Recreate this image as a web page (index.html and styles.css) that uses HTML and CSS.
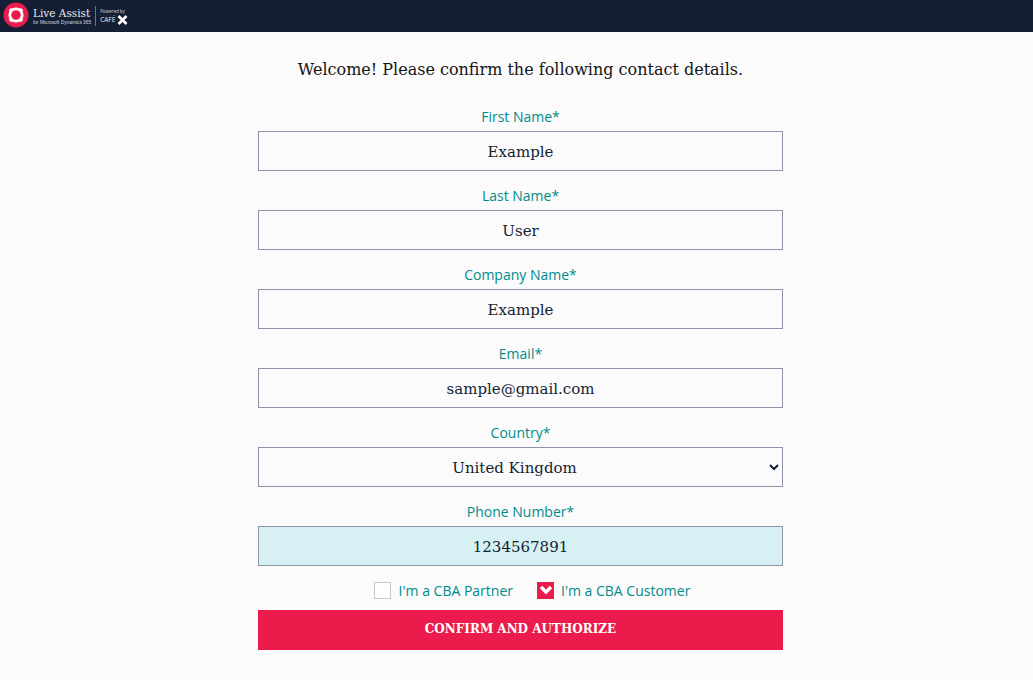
FILE: index.html
```html
<!DOCTYPE html>
<html lang="en">
<head>
  <meta charset="UTF-8" />
  <title>Live Assist</title>
  <link rel="stylesheet" href="styles.css">
</head>
<body>
  <!-- Top bar -->
  <header class="topbar">
    <svg class="logo-mark" width="26" height="26" viewBox="0 0 26 26">
      <circle cx="13" cy="13" r="12.5" fill="#eb1c4b" />
      <circle cx="13" cy="13" r="6.2" fill="none" stroke="#fff" stroke-width="2.8" />
      <path d="M7 7l2 2M19 7l-2 2M7 19l2-2M19 19l-2-2" stroke="#fff" stroke-width="3.6" />
    </svg>
    <div class="brand">
      <span class="brand-name">Live Assist</span>
      <span class="brand-sub">for Microsoft Dynamics 365</span>
    </div>
    <div class="powered">
      <span class="powered-by">Powered by</span>
      <span class="powered-cafe">CAFÉ
        <svg width="11" height="10" viewBox="0 0 11 10">
          <path d="M1.5 1l8 8M9.5 1l-8 8" stroke="#fff" stroke-width="2.6" />
        </svg>
      </span>
    </div>
  </header>
  <!-- Form -->
  <main class="content">
    <h1 class="title">Welcome! Please confirm the following contact details.</h1>
    <form class="contact-form">
      <label class="field">First Name*
        <input class="control" type="text" value="Example" />
      </label>
      <label class="field">Last Name*
        <input class="control" type="text" value="User" />
      </label>
      <label class="field">Company Name*
        <input class="control" type="text" value="Example" />
      </label>
      <label class="field">Email*
        <input class="control" type="email" value="sample@gmail.com" />
      </label>
      <label class="field">Country*
        <select class="control">
          <option>United Kingdom</option>
        </select>
      </label>
      <label class="field">Phone Number*
        <input class="control control-filled" type="text" value="1234567891" />
      </label>
      <div class="checks">
        <label class="check"><span class="box"></span>I'm a CBA Partner</label>
        <label class="check"><span class="box box-on">
          <svg width="14" height="10" viewBox="0 0 14 10">
            <path d="M2 2l5 5 5-5" fill="none" stroke="#fff" stroke-width="3.4" />
          </svg>
        </span>I'm a CBA Customer</label>
      </div>
      <button class="submit" type="button">CONFIRM AND AUTHORIZE</button>
    </form>
  </main>
</body>
</html>
```

FILE: styles.css
```css
body {
  margin: 0;
  background: #fbfbfc;
  font-family: "Open Sans", sans-serif;
}
/* Top bar */
.topbar {
  height: 32px;
  background: #141f35;
  color: #fff;
  display: flex;
  align-items: center;
  padding-left: 3px;
  overflow: hidden;
}
.logo-mark {
  flex: none;
  margin-bottom: 3px;
}
.brand {
  display: flex;
  flex-direction: column;
  margin-left: 4px;
}
.brand-name {
  font-family: "DejaVu Serif", serif;
  font-size: 10.5px;
  line-height: 13px;
  color: #e8e9ec;
}
.brand-sub {
  font-family: "Liberation Sans", sans-serif;
  font-size: 4.8px;
  line-height: 6px;
  color: #d6d8dd;
}
.powered {
  margin-left: 4px;
  padding-left: 4px;
  border-left: 1px solid #6b7384;
  height: 20px;
  display: flex;
  flex-direction: column;
  justify-content: center;
}
.powered-by {
  font-size: 4.5px;
  line-height: 7px;
  color: #d6d8dd;
}
.powered-cafe {
  display: flex;
  align-items: center;
  gap: 2px;
  font-size: 6.5px;
  line-height: 10px;
  color: #e8e9ec;
}
/* Form */
.content {
  width: 525px;
  margin: 0 auto;
  position: relative;
  left: 4px;
}
.title {
  margin: 0;
  padding-top: 27px;
  font-family: "DejaVu Serif", serif;
  font-size: 16px;
  font-weight: 400;
  line-height: 22px;
  color: #141414;
  text-align: center;
  white-space: nowrap;
}
.contact-form {
  margin-top: 26px;
}
.field {
  display: block;
  text-align: center;
  font-size: 14px;
  line-height: 19px;
  color: #008b8b;
  margin-bottom: 15px;
}
.control {
  display: block;
  box-sizing: border-box;
  width: 100%;
  height: 40px;
  margin-top: 5px;
  padding-top: 2px;
  border: 1px solid #8e94a8;
  border-radius: 0;
  background: #fbfbfc;
  font-family: "DejaVu Serif", serif;
  font-size: 15px;
  color: #141f35;
  text-align: center;
  outline: none;
}
select.control {
  text-align-last: center;
}
.control-filled {
  background: #d6f0f4;
}
.checks {
  display: flex;
  justify-content: center;
  gap: 24px;
  padding-left: 23px;
  height: 20px;
  margin-top: -1px;
  align-items: center;
}
.check {
  display: flex;
  align-items: center;
  gap: 8px;
  font-size: 14px;
  color: #008b8b;
}
.box {
  box-sizing: border-box;
  width: 17px;
  height: 17px;
  border: 1px solid #c8c8c8;
  background: #fff;
  display: flex;
  align-items: center;
  justify-content: center;
}
.box-on {
  margin-right: -1px;
  background: #eb1c4b;
  border-color: #eb1c4b;
}
.submit {
  display: block;
  width: 100%;
  height: 40px;
  margin-top: 10px;
  padding-bottom: 4px;
  border: 0;
  background: #eb1c4b;
  color: #fff;
  font-family: "DejaVu Serif", serif;
  font-size: 12px;
  font-weight: 700;
}
```
